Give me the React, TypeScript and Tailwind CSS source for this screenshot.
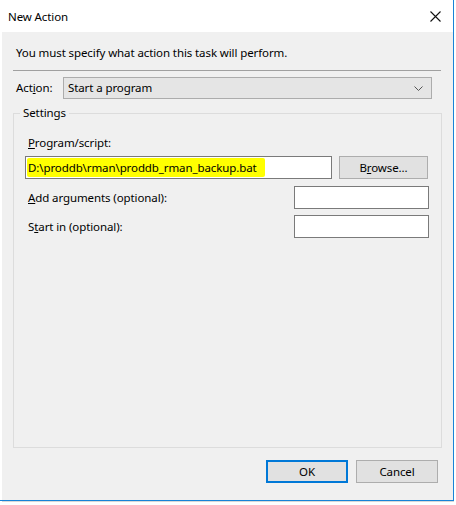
import React from "react";

const font = { fontFamily: '"Noto Sans", "Segoe UI", Arial, sans-serif' };

function Field({ className }: { className: string }) {
  return <div className={`bg-white border border-[#7a7a7a] ${className}`} />;
}

export default function App() {
  return (
    <div className="w-[456px] h-[505px] bg-white text-[11.5px] tracking-[-0.1px] text-black" style={font}>
      <div className="w-[454px] h-[501px] flex flex-col border-r border-b border-[#1883d7] pl-[2px]">
        {/* Title bar */}
        <div className="h-[32px] bg-white flex items-center justify-between pl-[8px] pr-[12px] -ml-[2px]">
          <span className="mt-[1px]">New Action</span>
          <svg width="11" height="11" viewBox="0 0 11 11" className="mt-[1px]">
            <path d="M0.5 0.5 L10.5 10.5 M10.5 0.5 L0.5 10.5" stroke="#111" strokeWidth="1.1" />
          </svg>
        </div>

        {/* Body */}
        <div className="flex-1 bg-[#f0f0f0] flex flex-col">
          <div className="pl-[14px] pt-[12px] h-[38px]">You must specify what action this task will perform.</div>
          <div className="mx-[11px] w-[428px] h-px bg-[#a0a0a0]" />

          <div className="flex items-center mt-[6px] pl-[14px]">
            <span className="w-[47px]">
              Act<u>i</u>on:
            </span>
            <div className="w-[369px] h-[22px] bg-[#e5e5e5] border border-[#acacac] flex items-center justify-between pl-[4px] pr-[8px]">
              <span>Start a program</span>
              <svg width="9" height="5" viewBox="0 0 9 5">
                <path d="M0.5 0.5 L4.5 4.5 L8.5 0.5" stroke="#555" fill="none" strokeWidth="1" />
              </svg>
            </div>
          </div>

          {/* Settings group */}
          <div className="relative mt-[14px] ml-[11px] w-[429px] h-[335px] border border-[#dcdcdc]">
            <span className="absolute -top-[9px] left-[6px] bg-[#f0f0f0] px-[3px] leading-[16px]">Settings</span>
            <div className="pl-[14px] pt-[20px]">
              <u>P</u>rogram/script:
            </div>
            <div className="flex items-center mt-[5px] pl-[11px]">
              <div className="w-[307px] h-[23px] bg-white border border-[#7a7a7a] flex items-center pl-[1px]">
                <span className="bg-[#ffff00] h-[19px] leading-[19px] pl-[1px] pr-[8px] rounded-[2px]">
                  D:\proddb\rman\proddb_rman_backup.bat
                </span>
              </div>
              <div className="ml-[7px] w-[89px] h-[23px] bg-[#e1e1e1] border border-[#adadad] flex items-center justify-center">
                <span>
                  B<u>r</u>owse...
                </span>
              </div>
            </div>
            <div className="flex items-center justify-between mt-[7px] pl-[14px] pr-[12px]">
              <span>
                <u>A</u>dd arguments (optional):
              </span>
              <Field className="w-[135px] h-[23px]" />
            </div>
            <div className="flex items-center justify-between mt-[6px] pl-[14px] pr-[12px]">
              <span>
                S<u>t</u>art in (optional):
              </span>
              <Field className="w-[135px] h-[23px]" />
            </div>
          </div>

          <div className="flex justify-end gap-[8px] mt-[12px] pr-[15px]">
            <div className="w-[82px] h-[23px] bg-[#e1e1e1] border-2 border-[#0078d7] flex items-center justify-center">OK</div>
            <div className="w-[82px] h-[23px] bg-[#e1e1e1] border border-[#adadad] flex items-center justify-center">Cancel</div>
          </div>
        </div>
      </div>
      <div className="w-[452px] ml-[2px] h-px bg-[#d8d8d8]" />
    </div>
  );
}
